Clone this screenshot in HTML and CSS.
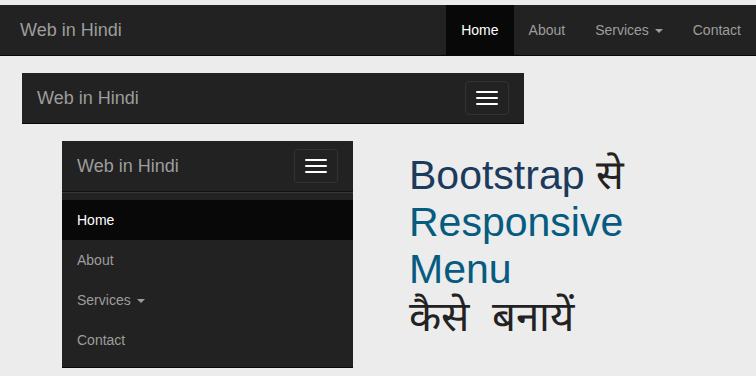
FILE: index.html
```html
<!DOCTYPE html>
<html lang="hi">
<head>
    <meta charset="UTF-8">
    <meta name="viewport" content="width=device-width, initial-scale=1.0">
    <title>Bootstrap से Responsive Menu</title>
    <link rel="stylesheet" href="styles.css">
</head>
<body>

    <!-- Desktop menu -->
    <nav class="navbar navbar-top">
        <a class="brand" href="#">Web in Hindi</a>
        <ul class="nav-links">
            <li class="active"><a href="#">Home</a></li>
            <li><a href="#">About</a></li>
            <li><a href="#">Services <span class="caret"></span></a></li>
            <li><a href="#">Contact</a></li>
        </ul>
    </nav>

    <!-- Tablet menu (collapsed) -->
    <nav class="navbar navbar-mid">
        <a class="brand" href="#">Web in Hindi</a>
        <button class="toggle">
            <span class="bar"></span>
            <span class="bar"></span>
            <span class="bar"></span>
        </button>
    </nav>

    <div class="row">
        <!-- Mobile menu (opened) -->
        <nav class="navbar navbar-mobile">
            <div class="navbar-header">
                <a class="brand" href="#">Web in Hindi</a>
                <button class="toggle">
                    <span class="bar"></span>
                    <span class="bar"></span>
                    <span class="bar"></span>
                </button>
            </div>
            <div class="collapse">
                <ul class="nav-stack">
                    <li class="active"><a href="#">Home</a></li>
                    <li><a href="#">About</a></li>
                    <li><a href="#">Services <span class="caret"></span></a></li>
                    <li><a href="#">Contact</a></li>
                </ul>
            </div>
        </nav>

        <h1 class="title">
            <span class="t-dark">Bootstrap</span> से<br>
            <span class="t-blue">Responsive<br>Menu</span><br>
            <span class="t-hindi">कैसे&nbsp; बनायें</span>
        </h1>
    </div>

</body>
</html>
```

FILE: styles.css
```css
body {
    font-family: "Liberation Sans", Arial, sans-serif;
    background-color: #ececec;
    margin: 0;
    padding: 5px 0 0;
}

a {
    text-decoration: none;
}

ul {
    list-style: none;
    margin: 0;
    padding: 0;
}

/* Navbar base */
.navbar {
    background-color: #222;
    border-bottom: 1px solid #080808;
}

.brand {
    color: #9d9d9d;
    font-size: 18px;
    line-height: 20px;
    padding: 15px;
}

.caret {
    display: inline-block;
    width: 0;
    height: 0;
    margin-left: 2px;
    vertical-align: middle;
    border-top: 4px solid;
    border-left: 4px solid transparent;
    border-right: 4px solid transparent;
}

.toggle {
    display: flex;
    flex-direction: column;
    gap: 4px;
    padding: 9px 10px;
    margin: 8px 15px 8px 0;
    background: transparent;
    border: 1px solid #333;
    border-radius: 4px;
}

.toggle .bar {
    display: block;
    width: 22px;
    height: 2px;
    border-radius: 1px;
    background-color: #fff;
}

/* Top bar */
.navbar-top {
    display: flex;
    justify-content: space-between;
    align-items: center;
    height: 50px;
    padding-left: 5px;
}

.nav-links {
    display: flex;
    align-self: stretch;
}

.nav-links a {
    display: block;
    color: #9d9d9d;
    font-size: 14px;
    line-height: 20px;
    padding: 15px;
}

.nav-links .active a {
    color: #fff;
    background-color: #080808;
}

/* Collapsed bar */
.navbar-mid {
    display: flex;
    justify-content: space-between;
    align-items: center;
    width: 502px;
    height: 50px;
    margin: 17px 0 0 22px;
}

/* Opened mobile menu */
.row {
    display: flex;
    align-items: flex-start;
    margin-top: 17px;
}

.navbar-mobile {
    width: 291px;
    margin-left: 62px;
}

.navbar-header {
    display: flex;
    justify-content: space-between;
    align-items: center;
    height: 50px;
}

.collapse {
    border-top: 1px solid #101010;
    box-shadow: inset 0 1px 0 rgba(255, 255, 255, 0.1);
    padding: 8px 0 7px;
}

.nav-stack a {
    display: block;
    color: #9d9d9d;
    font-size: 14px;
    line-height: 20px;
    padding: 10px 15px;
}

.nav-stack .active a {
    color: #fff;
    background-color: #080808;
}

/* Heading */
.title {
    margin: 11px 0 0 56px;
    font-size: 41px;
    font-weight: normal;
    line-height: 47px;
    color: #222;
}

.t-dark {
    color: #1b3a5c;
}

.t-blue {
    color: #065b80;
}

.t-hindi {
    font-size: 42px;
}
```
